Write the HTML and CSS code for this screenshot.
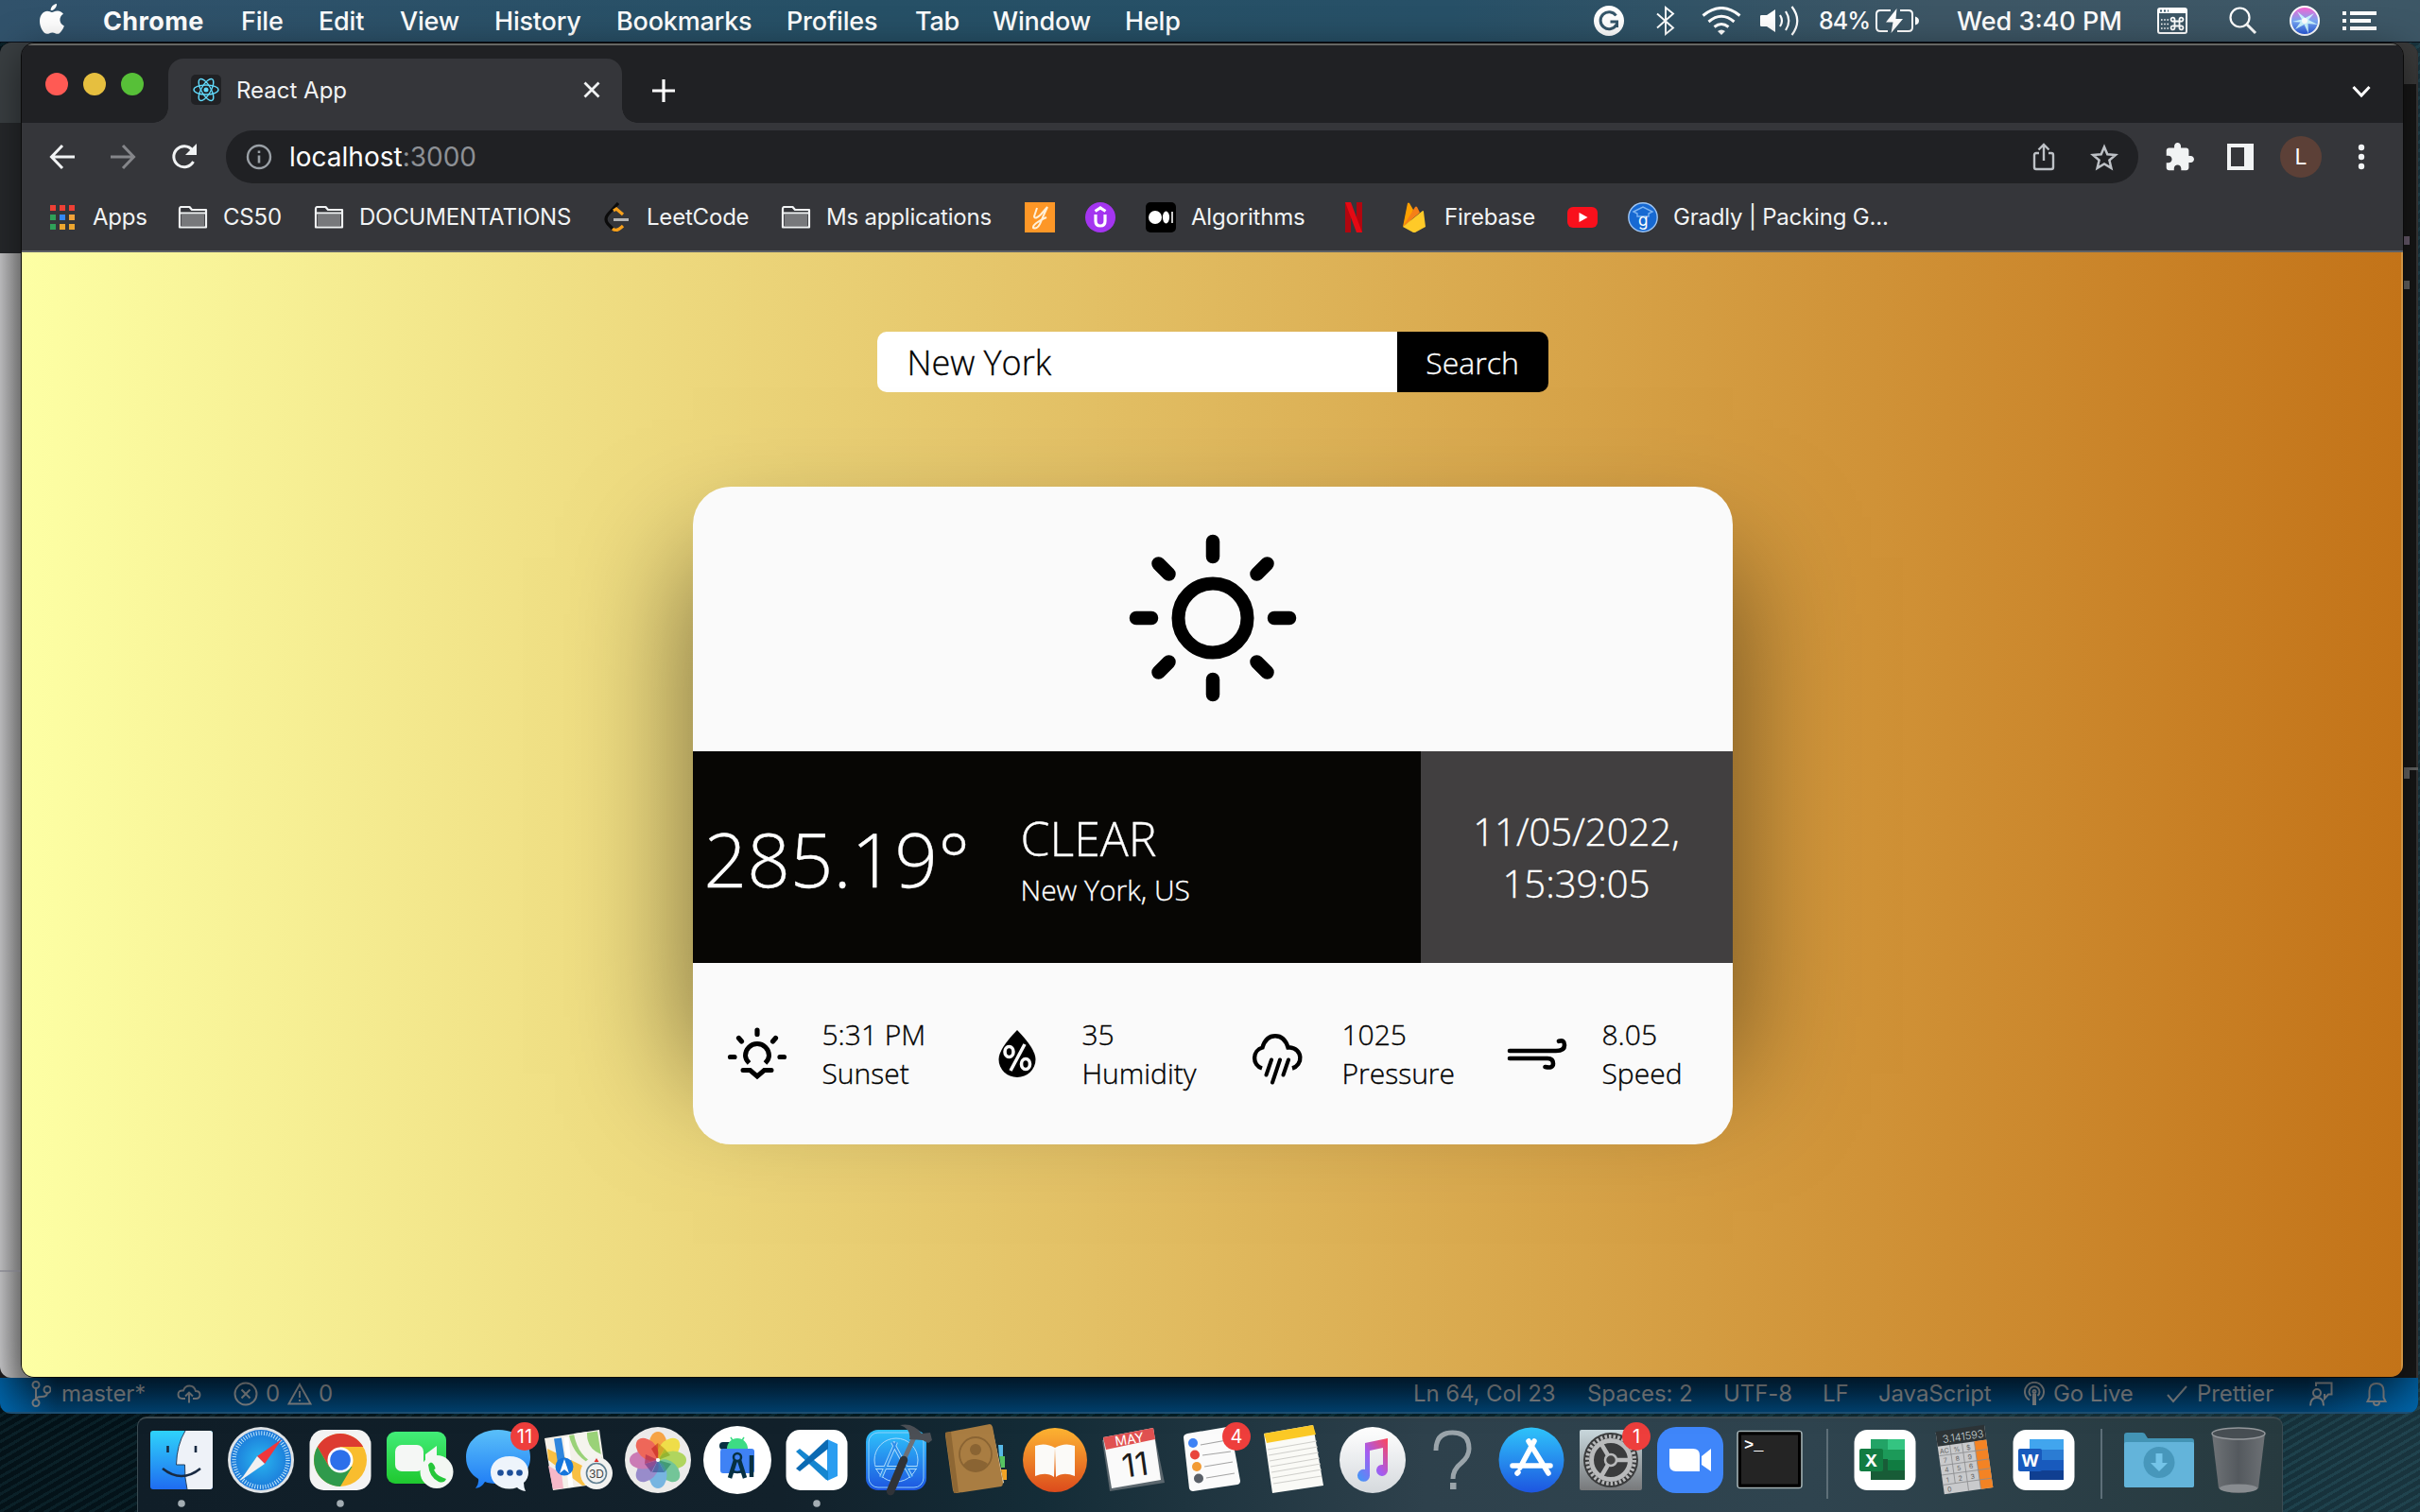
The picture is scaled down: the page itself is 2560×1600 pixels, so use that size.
FILE: index.html
```html
<!DOCTYPE html>
<html lang="en">
<head>
<meta charset="utf-8">
<title>React App</title>
<link rel="stylesheet" href="styles.css">
</head>
<body>
<svg width="0" height="0" class="defs" aria-hidden="true">
  <defs>
    <linearGradient id="gBlue" x1="0" y1="0" x2="0" y2="1"><stop offset="0" stop-color="#5ac0fa"/><stop offset="1" stop-color="#1d7af5"/></linearGradient>
    <linearGradient id="gCyan" x1="0" y1="0" x2="0" y2="1"><stop offset="0" stop-color="#2fc4fb"/><stop offset="1" stop-color="#1d55e0"/></linearGradient>
    <linearGradient id="gGreen" x1="0" y1="0" x2="0" y2="1"><stop offset="0" stop-color="#42ec78"/><stop offset="1" stop-color="#1fc82f"/></linearGradient>
    <linearGradient id="gWhite" x1="0" y1="0" x2="0" y2="1"><stop offset="0" stop-color="#ffffff"/><stop offset="1" stop-color="#d5d9dd"/></linearGradient>
    <linearGradient id="gOrange" x1="0" y1="0" x2="0" y2="1"><stop offset="0" stop-color="#fdb432"/><stop offset="1" stop-color="#dc4b1c"/></linearGradient>
    <linearGradient id="gNote" x1="1" y1="0" x2="0" y2="1"><stop offset="0" stop-color="#ff4758"/><stop offset=".5" stop-color="#a45cf0"/><stop offset="1" stop-color="#3c9cf8"/></linearGradient>
    <linearGradient id="gFace" x1="0" y1="0" x2="0" y2="1"><stop offset="0" stop-color="#2fd3fb"/><stop offset="1" stop-color="#1f6cf0"/></linearGradient>
    <linearGradient id="gMetal" x1="0" y1="0" x2="0" y2="1"><stop offset="0" stop-color="#c9d8dd"/><stop offset="1" stop-color="#77797b"/></linearGradient>
    <linearGradient id="gTrash" x1="0" y1="0" x2="1" y2="0"><stop offset="0" stop-color="#6f7377"/><stop offset=".5" stop-color="#54595e"/><stop offset="1" stop-color="#6d7175"/></linearGradient>
    <radialGradient id="gSafari"><stop offset="0" stop-color="#29b6f0"/><stop offset="1" stop-color="#1b77d8"/></radialGradient>
    <linearGradient id="gSiri" x1="0" y1="0" x2="0" y2="1"><stop offset="0" stop-color="#ff5fd0"/><stop offset=".5" stop-color="#7aa8f5"/><stop offset="1" stop-color="#2456d8"/></linearGradient>
    <symbol id="folder" viewBox="0 0 32 26"><path d="M2 4.500V23.500H30V5H15L12.500 2H3.500Q2 2 2 4.500Z" fill="none" stroke="#f1f3f4" stroke-width="2.200" stroke-linejoin="round"/><path d="M4 10H28V22H4Z" fill="#77787b"/><path d="M2 8.500H30" stroke="#f1f3f4" stroke-width="2"/></symbol>
  </defs>
</svg>

<header class="menubar">
  <svg class="m-icon" width="28" height="32" viewBox="0 0 28 32" fill="#fff"><path d="M19 0c.3 3.600-3 7.300-6.300 7.100C12.300 3.700 15.600.2 19 0zM13.900 8.900c1.500 0 3-1.500 6-1.500 2.500 0 4.800 1.400 6.100 3.400-5.300 3.100-4.400 10.500.9 12.600-1.200 3.200-4 8.300-6.900 8.400-2.200 0-3-1.400-5.600-1.400s-3.500 1.400-5.600 1.400C5 31.800 1 24.700 1 18.400 1 11.500 5.300 7.800 9 7.800c2.200 0 3.700 1.100 4.900 1.100z"/></svg>
  <b>Chrome</b><span>File</span><span>Edit</span><span>View</span><span>History</span><span>Bookmarks</span><span>Profiles</span><span>Tab</span><span>Window</span><span>Help</span>
  <svg width="32" height="32" viewBox="0 0 32 32"><circle cx="16" cy="16" r="16" fill="#fff"/><path d="M23.500 10.500A9 9 0 1 0 24 20M17.500 17H24.500V23" fill="none" stroke="#35566a" stroke-width="3"/></svg>
  <svg width="20" height="32" viewBox="0 0 20 32"><path d="M1 8.500L18 23.500 10 30V2L18 8.500 1 23.500" fill="none" stroke="#fff" stroke-width="1.900"/></svg>
  <svg width="42" height="30" viewBox="0 0 42 30"><g fill="none" stroke="#fff" stroke-width="3"><path d="M1.500 9.500Q21-6.500 40.500 9.500"/><path d="M7.500 16Q21 4.500 34.500 16"/><path d="M13.500 21.500Q21 15.500 28.500 21.500"/></g><path d="M17 26Q21 23 25 26L21 30Z" fill="#fff"/></svg>
  <svg width="42" height="32" viewBox="0 0 42 32"><path d="M0 11Q0 10 1.500 10H7L16 4V28L7 22H1.500Q0 22 0 21Z" fill="#fff"/><path d="M21 10Q25 16 21 22M27 6Q33.500 16 27 26M33.500 1Q45 16 33.500 31" fill="none" stroke="#fff" stroke-width="2.200"/></svg>
  <span class="batt">84%</span>
  <svg width="46" height="26" viewBox="0 0 46 26"><path d="M16 2H5Q1 2 1 6V20Q1 24 5 24H13M26 2H35Q39 2 39 6V20Q39 24 35 24H23" fill="none" stroke="#fff" stroke-width="2"/><path d="M42 8.500Q46 9.500 46 13T42 17.500Z" fill="#fff"/><path d="M22.500 0L11 14.500H18.500L16.500 26 29 11H21.500Z" fill="#fff"/></svg>
  <span class="clock">Wed 3:40 PM</span>
  <svg width="32" height="28" viewBox="0 0 32 28"><rect x="1" y="1" width="30" height="26" rx="2" fill="none" stroke="#fff" stroke-width="2"/><path d="M1 1H31V6H1Z" fill="#fff"/><path d="M3 3.500H12" stroke="#35566a" stroke-width="2" stroke-dasharray="2 2"/><path d="M4 13H12M4 17.500H12M4 22H12" stroke="#fff" stroke-width="1.600" stroke-dasharray="1.600 1.600"/><path d="M18.500 14.500h5v5h-5zM18.500 14.500h-1.500a2 2 0 1 1 1.500-1.500zM23.500 14.500v-1.500a2 2 0 1 1 1.500 1.500zM23.500 19.500h1.500a2 2 0 1 1-1.500 1.500zM18.500 19.500v1.500a2 2 0 1 1-1.500-1.500z" fill="none" stroke="#fff" stroke-width="1.800"/></svg>
  <svg width="30" height="30" viewBox="0 0 30 30" fill="none" stroke="#fff"><circle cx="11.500" cy="11.500" r="10" stroke-width="2.200"/><path d="M19 19L28 28" stroke-width="3"/></svg>
  <svg width="32" height="32" viewBox="0 0 32 32"><circle cx="16" cy="16" r="15" fill="url(#gSiri)" stroke="#fff" stroke-width="2"/><path d="M3 17L13 14.500 8 6 16.500 13 26 8 20 15 30 20 19.500 19 20 29.500 15.500 20 6 25 11.500 17.500Z" fill="#c9f3ff"/><circle cx="16" cy="16" r="3" fill="#fff"/></svg>
  <svg width="36" height="20" viewBox="0 0 36 20" fill="#fff"><path d="M0 0H4V4H0ZM8 0H36V4H8ZM0 8H4V12H0ZM8 8H30V12H8ZM0 16H4V20H0ZM8 16H36V20H8Z"/></svg>
</header>

<main class="desktop">
  <section class="editor">
    <div class="gutter"><i></i></div>
    <div class="minimap"><i class="mk a"></i><i class="mk b"></i><i class="mk c"></i><i class="line"></i></div>
    <footer class="statusbar">
      <svg width="22" height="28" viewBox="0 0 22 28"><g fill="none" stroke="currentColor" stroke-width="2"><circle cx="6" cy="4.500" r="3.500"/><circle cx="6" cy="23.500" r="3.500"/><circle cx="18" cy="9.500" r="3.500"/><path d="M6 8V20M18 13Q18 17 12 17T6 20"/></g></svg>
      <span>master*</span>
      <svg width="26" height="20" viewBox="0 0 26 20"><path d="M9 15H6Q1.500 15 1.500 10.500T7 6.500Q8.500 1.500 13.500 1.500T20 7Q24.500 7 24.500 11T20 15H17M13 19.500V8.500M9 12.500L13 8.500 17 12.500" fill="none" stroke="currentColor" stroke-width="1.900"/></svg>
      <svg width="26" height="26" viewBox="0 0 26 26"><g fill="none" stroke="currentColor" stroke-width="2"><circle cx="13" cy="13" r="11.500"/><path d="M8.500 8.500L17.500 17.500M17.500 8.500L8.500 17.500"/></g></svg>
      <span>0</span>
      <svg width="26" height="24" viewBox="0 0 26 24"><path d="M13 2L24.500 22.500H1.500ZM13 9V16M13 18V20" fill="none" stroke="currentColor" stroke-width="1.900"/></svg>
      <span>0</span>
      <span>Ln 64, Col 23</span><span>Spaces: 2</span><span>UTF-8</span><span>LF</span><span>JavaScript</span>
      <svg width="22" height="26" viewBox="0 0 22 26"><g fill="none" stroke="currentColor" stroke-width="2"><path d="M6 19.500A10 10 0 1 1 16 19.500M7.500 15A5.500 5.500 0 1 1 14.500 15"/><circle cx="11" cy="10.500" r="1.500"/><path d="M11 13V25" stroke-width="4"/></g></svg>
      <span>Go Live</span>
      <svg width="22" height="20" viewBox="0 0 22 20"><path d="M1 11L7 18 21 2" fill="none" stroke="currentColor" stroke-width="2"/></svg>
      <span>Prettier</span>
      <svg width="26" height="26" viewBox="0 0 26 26"><g fill="none" stroke="currentColor" stroke-width="2"><path d="M8 5V1.500H24.500V13.500H21L17 18V13"/><circle cx="9" cy="12" r="4"/><path d="M2 25.500Q2 17 9 17T16 25.500"/></g></svg>
      <svg width="22" height="26" viewBox="0 0 22 26"><path d="M1.500 21H20.500L18.500 17V10Q18.500 2 11 2T3.500 10V17ZM8 22Q8 25 11 25T14 22" fill="none" stroke="currentColor" stroke-width="2"/></svg>
    </footer>
  </section>

  <section class="chrome">
    <div class="tabstrip">
      <div class="lights"><i class="red"></i><i class="yellow"></i><i class="green"></i></div>
      <div class="tab">
        <svg width="32" height="32" viewBox="0 0 32 32"><rect width="32" height="32" rx="5" fill="#202124"/><g fill="none" stroke="#61dafb" stroke-width="1.400"><ellipse cx="16" cy="16" rx="13" ry="5"/><ellipse cx="16" cy="16" rx="13" ry="5" transform="rotate(60 16 16)"/><ellipse cx="16" cy="16" rx="13" ry="5" transform="rotate(120 16 16)"/></g><circle cx="16" cy="16" r="2.500" fill="#61dafb"/></svg>
        <span>React App</span>
        <svg width="18" height="18" viewBox="0 0 18 18"><path d="M1.500 1.500L16.500 16.500M16.500 1.500L1.500 16.500" stroke="#f1f3f4" stroke-width="2.800"/></svg>
      </div>
      <svg class="plus" width="26" height="26" viewBox="0 0 26 26"><path d="M13 1V25M1 13H25" stroke="#fff" stroke-width="3.200"/></svg>
      <svg class="chev" width="20" height="14" viewBox="0 0 20 14"><path d="M1.500 2L10 11 18.500 2" fill="none" stroke="#fff" stroke-width="3"/></svg>
    </div>
    <div class="toolbar">
      <svg width="28" height="28" viewBox="0 0 28 28"><path d="M27 14H3M14 2L2.500 14 14 26" fill="none" stroke="#f1f3f4" stroke-width="3"/></svg>
      <svg width="28" height="28" viewBox="0 0 28 28"><path d="M1 14H25M14 2L25.500 14 14 26" fill="none" stroke="#85868a" stroke-width="3"/></svg>
      <svg width="28" height="28" viewBox="0 0 28 28"><path d="M23.500 19A11 11 0 1 1 22.500 7" fill="none" stroke="#f1f3f4" stroke-width="3"/><path d="M27 0V12H15Z" fill="#f1f3f4"/></svg>
      <div class="omnibox">
        <svg width="28" height="28" viewBox="0 0 28 28"><circle cx="14" cy="14" r="12" fill="none" stroke="#9aa0a6" stroke-width="2.400"/><path d="M14 12.500V20.500M14 7.500V10" stroke="#9aa0a6" stroke-width="2.600"/></svg>
        <span class="url">localhost<em>:3000</em></span>
        <svg width="24" height="30" viewBox="0 0 24 30"><path d="M7 11H4Q2 11 2 13V26Q2 28 4 28H20Q22 28 22 26V13Q22 11 20 11H17M12 19V3M6.500 7.500L12 2 17.500 7.500" fill="none" stroke="#bdc1c6" stroke-width="2.400"/></svg>
        <svg width="30" height="29" viewBox="0 0 30 29"><path d="M15 3.500L18.300 11.200 27 11.900 20.400 17.500 22.400 25.800 15 21.400 7.600 25.800 9.600 17.500 3 11.900 11.700 11.200Z" fill="none" stroke="#bdc1c6" stroke-width="2.500"/></svg>
      </div>
      <svg width="30" height="30" viewBox="1.500 1 21.500 21.500" fill="#f1f3f4"><path d="M20.500 11H19V7c0-1.100-.9-2-2-2h-4V3.500C13 2.120 11.880 1 10.500 1S8 2.120 8 3.500V5H4c-1.100 0-1.990.9-1.990 2v3.800H3.500c1.490 0 2.700 1.210 2.700 2.700s-1.210 2.700-2.700 2.700H2V20c0 1.100.9 2 2 2h3.800v-1.500c0-1.490 1.210-2.700 2.700-2.700s2.700 1.210 2.700 2.700V22H17c1.100 0 2-.9 2-2v-4h1.500c1.380 0 2.500-1.120 2.500-2.500S21.880 11 20.500 11z"/></svg>
      <svg width="28" height="28" viewBox="0 0 28 28"><path fill-rule="evenodd" d="M0 0H28V28H0ZM4 4V24H18V4Z" fill="#f1f3f4"/></svg>
      <span class="avatar">L</span>
      <svg width="8" height="28" viewBox="0 0 8 28" fill="#f1f3f4"><circle cx="4" cy="4" r="3.200"/><circle cx="4" cy="14" r="3.200"/><circle cx="4" cy="24" r="3.200"/></svg>
    </div>
    <nav class="bookmarks">
      <svg width="28" height="28" viewBox="0 0 28 28"><path d="M1 1h6v6H1zM11 1h6v6h-6zM21 1h6v6h-6z" fill="#ee4035"/><path d="M1 11h6v6H1z" fill="#2fa158"/><path d="M11 11h6v6h-6z" fill="#3487f3"/><path d="M21 11h6v6h-6z" fill="#f2a33a"/><path d="M1 21h6v6H1z" fill="#2fa158"/><path d="M11 21h6v6h-6zM21 21h6v6h-6z" fill="#eda62f"/></svg>
      <span>Apps</span>
      <svg width="32" height="26"><use href="#folder"/></svg><span>CS50</span>
      <svg width="32" height="26"><use href="#folder"/></svg><span>DOCUMENTATIONS</span>
      <svg width="28" height="32" viewBox="0 0 28 32" fill="none" stroke-width="3.200"><path d="M15 1L4 13Q0 18 4 23L9 28Q11 30 13 30" stroke="#0b0b0b"/><path d="M10 9L13 7 20 13M9 28Q13 32 20 25" stroke="#f9a11b"/><path d="M10 18.500H26" stroke="#b3b3b3"/></svg>
      <span>LeetCode</span>
      <svg width="32" height="26"><use href="#folder"/></svg><span>Ms applications</span>
      <svg width="32" height="32" viewBox="0 0 32 32"><path d="M0 0H32V32H0Z" fill="#fd9727"/><path d="M13 6L10 15Q11 19 17 13L24 5Q19 16 16 23 13 29 9 27 8 23 23 16" fill="none" stroke="#fff0d8" stroke-width="2"/></svg>
      <svg width="32" height="32" viewBox="0 0 32 32"><circle cx="16" cy="16" r="16" fill="#a435f0"/><path d="M11 13V20Q11 25 16 25T21 20V13M10.500 9.500L16 6 21.500 9.500" fill="none" stroke="#fff" stroke-width="3.200"/></svg>
      <svg width="32" height="32" viewBox="0 0 32 32"><rect width="32" height="32" rx="5" fill="#000"/><circle cx="10" cy="16" r="7" fill="#fff"/><ellipse cx="21.500" cy="16" rx="3.600" ry="6.500" fill="#fff"/><path d="M28 10V22" stroke="#fff" stroke-width="1.600"/></svg>
      <span>Algorithms</span>
      <svg width="18" height="32" viewBox="0 0 18 32"><path d="M0 0H6V32H0ZM12 0H18V32H12Z" fill="#b1060f"/><path d="M0 0H6L18 32H12Z" fill="#e50914"/></svg>
      <svg width="24" height="32" viewBox="0 0 24 32"><path d="M0 26L5 1Q6 0 7 1L11 8 8 20Z" fill="#ffa000"/><path d="M0 26L13 5Q14 4 15 5L18 11Z" fill="#f57f17"/><path d="M0 26L21 9Q22 9 22 10L24 26 13 32Q12 32 11 32Z" fill="#ffca28"/></svg>
      <span>Firebase</span>
      <svg width="32" height="24" viewBox="0 0 32 24"><rect y="1" width="32" height="22" rx="6" fill="#f9101c"/><path d="M12.500 7L21.500 12 12.500 17Z" fill="#fff"/></svg>
      <svg width="32" height="32" viewBox="0 0 32 32"><circle cx="16" cy="16" r="15.200" fill="#1769d2" stroke="#9fc5f2" stroke-width="1.400"/><path d="M6 10L16 5 26 10 22 12V15H10V12Z" fill="none" stroke="#7db4f2" stroke-width="1.400"/><text x="16" y="25" text-anchor="middle" font-size="17" fill="#fff" class="ui">g</text></svg>
      <span>Gradly | Packing G...</span>
    </nav>

    <div class="page">
      <form class="search"><span class="field">New York</span><span class="btn">Search</span></form>
      <article class="card">
        <div class="hero">
          <svg width="180" height="180" viewBox="-90 -90 180 180" fill="none" stroke="#000" stroke-width="14.500" stroke-linecap="round"><circle r="36.500" stroke-width="14"/><path d="M0-81V-65M0 81V65M-81 0H-65M81 0H65M-57.500-57.500L-46.500-46.500M57.500-57.500L46.500-46.500M-57.500 57.500L-46.500 46.500M57.500 57.500L46.500 46.500" /></svg>
        </div>
        <div class="band">
          <div class="temp">285.19°</div>
          <div class="desc"><div class="cond">CLEAR</div><div class="place">New York, US</div></div>
          <div class="date">11/05/2022, 15:39:05</div>
        </div>
        <div class="stats">
          <div class="stat"><svg width="64" height="58" viewBox="0 0 64 58" fill="none" stroke="#000" stroke-width="5.200" stroke-linecap="round"><path d="M32 4V8.500M12.500 12.500L15.500 16M51.500 12.500L48.500 16M3.500 32.500H8M60.500 32.500H56"/><path d="M23.500 39Q19.500 35 19.500 31A12.500 12.500 0 0 1 44.500 31Q44.500 35 40.500 39" stroke-linecap="butt" stroke-width="5"/><path d="M17 46.500H24.500L32 53 39.500 46.500H47" stroke-width="5"/></svg><p>5:31 PM<br>Sunset</p></div>
          <div class="stat"><svg width="40" height="50" viewBox="0 0 40 50"><path d="M20 0Q39.500 20 39.500 31A19.500 19 0 0 1 .5 31Q.5 20 20 0Z"/><g fill="none" stroke="#fafafa" stroke-width="3.600"><path d="M28 15L13 43"/><ellipse cx="11.500" cy="23" rx="4.500" ry="5.500"/><ellipse cx="29" cy="36" rx="4.500" ry="5.500"/></g></svg><p>35<br>Humidity</p></div>
          <div class="stat"><svg class="low" width="56" height="54" viewBox="0 0 56 54" fill="none" stroke="#000" stroke-width="4.400" stroke-linecap="round"><path d="M12 36.500A11.500 11.500 0 0 1 12.500 14.500Q16 2.200 26 2.200T39.500 14.500H42A11.200 11.200 0 0 1 44 36.500" stroke-linecap="butt"/><path d="M22 27.500L16.500 43.500M31 27.500L23 51.500M40 27.500L34.500 43.500" stroke-width="4"/></svg><p>1025<br>Pressure</p></div>
          <div class="stat"><svg class="wind" width="64" height="34" viewBox="0 0 64 34" fill="none" stroke="#000" stroke-width="4.600" stroke-linecap="round"><path d="M3 13H52Q61 13 61 7T55 2.800M3 21H43Q49 21 49 26.500T40.500 30"/></svg><p>8.05<br>Speed</p></div>
        </div>
      </article>
    </div>
  </section>
</main>

<footer class="dock">
  <svg class="app" viewBox="0 0 84 100"><rect x="9" y="15" width="66" height="62" rx="3" fill="url(#gFace)"/><path d="M46 15H72Q75 15 75 18V74Q75 77 72 77H48Q45 64 45.500 51H36.500Q37 30 46 15Z" fill="#eef2f8"/><path d="M46 15Q37 30 36.500 51H45.500Q45 64 48 77" fill="none" stroke="#24405f" stroke-width="1"/><path d="M27.500 31V38M57 31V38" stroke="#182a42" stroke-width="2.600"/><path d="M22 55Q42 71 62 55" fill="none" stroke="#182a42" stroke-width="2.600"/><circle cx="42" cy="92" r="3.800" fill="#a3adb3"/></svg>
  <svg class="app" viewBox="0 0 84 100"><circle cx="42" cy="46" r="35" fill="#dfe3e6"/><circle cx="42" cy="46" r="32" fill="url(#gSafari)"/><circle cx="42" cy="46" r="28.500" fill="none" stroke="#bfe4fa" stroke-width="4.500" stroke-dasharray="1 1.800"/><path d="M64 24L46 50 38 42Z" fill="#f0373b"/><path d="M20 68L46 50 38 42Z" fill="#f1f1f1"/></svg>
  <svg class="app" viewBox="0 0 84 100"><rect x="9.500" y="14" width="65" height="64" rx="15" fill="#f3f3f3"/><circle cx="42" cy="46" r="28" fill="#f9bd2e"/><path d="M17.800 32A28 28 0 0 1 66.200 32H42L30 53Z" fill="#dd3b31"/><path d="M17.800 32A28 28 0 0 0 42 74L54.500 53 30 53Z" fill="#2f9a4c"/><circle cx="42" cy="46" r="13.500" fill="#fff"/><circle cx="42" cy="46" r="10.800" fill="#2c70ea"/><circle cx="42" cy="92" r="3.800" fill="#a3adb3"/></svg>
  <svg class="app" viewBox="0 0 84 100"><rect x="7" y="16" width="63" height="55" rx="9" fill="url(#gGreen)"/><rect x="16" y="30" width="30" height="28" rx="7" fill="#f5f7f5"/><path d="M48 40L60 31V57L48 48Z" fill="#f5f7f5"/><circle cx="60" cy="58.500" r="17.500" fill="#f3f7f3"/><path d="M51 51Q54 46 57 51T57 56Q59 61 63 63T70 66Q68 71 62 69 52 64 51 51Z" fill="#25c739"/></svg>
  <svg class="app" viewBox="0 0 84 100"><path d="M41 14C61 14 75 26 75 43S61 70 41 71Q32 71 27 69 24 75 17 76 21 71 20 66 7 58 7 43C7 26 21 14 41 14Z" fill="url(#gBlue)"/><path d="M53 42C65 42 73 49 73 59Q73 66 68 70 68 75 70 79 64 78 61 75 57 76.500 53 76.500C41 76.500 33 69 33 59S41 42 53 42Z" fill="#eef4fb"/><g fill="#1d4f99"><circle cx="43.500" cy="59.500" r="3.300"/><circle cx="53.500" cy="59.500" r="3.300"/><circle cx="63.500" cy="59.500" r="3.300"/></g><circle cx="69" cy="21" r="15" fill="#ee3e3c"/><text x="69" y="28" text-anchor="middle" font-size="20" fill="#fff" class="ui">11</text></svg>
  <svg class="app" viewBox="0 0 84 100"><path d="M6 23L64 14 72 70 15 78Z" fill="#f4f1ea"/><path d="M32 20L62 15.500 68 55Q38 48 32 20Z" fill="#9ad278"/><path d="M37 18L51 16Q50 34 66 40V52Q42 46 37 18Z" fill="#f5f4ee"/><path d="M9 34L38 48 66 62 70 70 46 73 10 46Z" fill="#f9c043"/><path d="M10 52L24 60 26 76 15 77Z" fill="#f5b8c8"/><path d="M20 23L25 55" stroke="#2f86dd" stroke-width="8"/><path d="M29 22L34 75" stroke="#fff" stroke-width="5"/><circle cx="27" cy="53" r="9.500" fill="#1576dc"/><path d="M27 45L32 60 27 56 22 60Z" fill="#fff"/><circle cx="61" cy="60" r="17" fill="#f2f2f0"/><circle cx="61" cy="60" r="10.500" fill="none" stroke="#5f7f91" stroke-width="1.600"/><text x="61" y="65" text-anchor="middle" font-size="12" fill="#444" class="ui">3D</text><path d="M61 44L63.500 48H58.500Z" fill="#e1302a"/></svg>
  <svg class="app" viewBox="0 0 84 100"><circle cx="42" cy="46" r="35" fill="#ecebea"/><g opacity=".88"><ellipse cx="42" cy="30" rx="9.500" ry="14" fill="#f89a2e"/><ellipse cx="42" cy="30" rx="9.500" ry="14" fill="#f0dc33" transform="rotate(45 42 46)"/><ellipse cx="42" cy="30" rx="9.500" ry="14" fill="#a8d24b" transform="rotate(90 42 46)"/><ellipse cx="42" cy="30" rx="9.500" ry="14" fill="#63c08d" transform="rotate(135 42 46)"/><ellipse cx="42" cy="30" rx="9.500" ry="14" fill="#68aee0" transform="rotate(180 42 46)"/><ellipse cx="42" cy="30" rx="9.500" ry="14" fill="#8d7fc7" transform="rotate(225 42 46)"/><ellipse cx="42" cy="30" rx="9.500" ry="14" fill="#c76dae" transform="rotate(270 42 46)"/><ellipse cx="42" cy="30" rx="9.500" ry="14" fill="#ef5546" transform="rotate(315 42 46)"/></g><g opacity=".55"><path d="M42 46L35 34 42 28Z" fill="#c01d12"/><path d="M42 46L42 28 49 34Z" fill="#c07a10"/><path d="M42 46L49 34 55 41Z" fill="#7f9a10"/><path d="M42 46L56 50 49 59Z" fill="#1c7a5a"/><path d="M42 46L49 59 36 59Z" fill="#204a88"/><path d="M42 46L35 59 28 50Z" fill="#5b2a7a"/><path d="M42 46L28 50 29 40Z" fill="#a31f4a"/></g><circle cx="42" cy="46" r="2" fill="#fff"/></svg>
  <svg class="app" viewBox="0 0 84 100"><circle cx="42" cy="46" r="36" fill="#fff"/><rect x="23" y="27" width="14" height="8" rx="4" fill="#073042"/><path d="M31 34A11 11 0 0 1 53 34Z" fill="#3ddc84"/><path d="M35 22L38 27M49 22L46 27" stroke="#3ddc84" stroke-width="1.500"/><rect x="24" y="34" width="36" height="26" rx="3" fill="#3f82f5"/><path d="M41 43L34 65M43 43L50 65" stroke="#073042" stroke-width="4.500"/><circle cx="42" cy="43" r="4" fill="#3f82f5" stroke="#073042" stroke-width="2.500"/><path d="M36 57Q42 61 48 57" fill="none" stroke="#073042" stroke-width="2.500"/><path d="M57 41V64" stroke="#073042" stroke-width="4.500"/></svg>
  <svg class="app" viewBox="0 0 84 100"><rect x="9.500" y="14" width="65" height="64" rx="15" fill="#fff"/><path d="M53 24L64 29V63L53 68Z" fill="#2a9df0"/><path d="M20 37L24 34 54 58V67L52 67Z" fill="#1586d0"/><path d="M20 55L24 58 54 34V25L52 25Z" fill="#0b6ab3"/><circle cx="42" cy="92" r="3.800" fill="#a3adb3"/></svg>
  <svg class="app" viewBox="0 0 84 100"><rect x="10" y="14" width="64" height="64" rx="13" fill="url(#gCyan)"/><rect x="13" y="17" width="58" height="58" rx="10" fill="none" stroke="#8fd0fb" stroke-width="1"/><g fill="none" stroke="#a9dafc"><circle cx="42" cy="46" r="23" stroke-width="1"/><path d="M42 27L26 64M38 27L58 64M20 54H64" stroke-width="4"/><path d="M42 27L26 64M38 27L58 64M20 54H64" stroke="#2b8deb" stroke-width="2"/></g><path d="M61 22L49 48" stroke="#6d7177" stroke-width="5"/><path d="M50 46L36 79" stroke="#303338" stroke-width="8.500" stroke-linecap="round"/><path d="M46 9Q60 6 69 18L78 17 80 25 76 28 70 25 56 24Q58 13 46 9Z" fill="#4b4f55"/></svg>
  <svg class="app" viewBox="0 0 84 100"><path d="M60 14L72 70 64 74Z" fill="#efe0c0"/><path d="M66 30H71V42H67Z" fill="#57b9e8"/><path d="M67 42H73V54H69Z" fill="#56c462"/><path d="M69 56H75V67H71Z" fill="#f2a325"/><path d="M10 17L57 8Q59 8 60 11L71 70Q71 73 69 74L22 81Q19 81 18 78L10 20Z" fill="#a97d42"/><path d="M10 17L16 16 24 80 19 81Z" fill="#8e6734"/><ellipse cx="42" cy="40" rx="17" ry="18" fill="none" stroke="#8a6433" stroke-width="1.800"/><circle cx="42" cy="35" r="6" fill="#8a6433"/><path d="M29 51Q34 44 42 45T55 50Q50 58 42 58T29 51Z" fill="#8a6433"/></svg>
  <svg class="app" viewBox="0 0 84 100"><circle cx="42" cy="46" r="34" fill="url(#gOrange)"/><path d="M42 33Q32 27 21 31V63Q33 58 41 64ZM42 33Q52 27 63 31V63Q51 58 43 64Z" fill="#fbfaf8"/></svg>
  <svg class="app" viewBox="0 0 84 100"><path d="M8 25L62 13 74 70 16 79Z" fill="#5b676e"/><path d="M9 22L62 12 70 67 18 76Z" fill="#fafafa"/><path d="M9 22L62 12 64 24 12 35Z" fill="#e05151"/><text x="37" y="29" text-anchor="middle" font-size="14" fill="#fff" class="ui" transform="rotate(-9 37 26)">MAY</text><text x="43" y="63" text-anchor="middle" font-size="34" fill="#1c1c1c" class="ui" transform="rotate(-8 43 52)">11</text></svg>
  <svg class="app" viewBox="0 0 84 100"><path d="M14 18L56 11Q59 11 60 14L70 68Q70 71 67 72L20 79Q17 79 16 76L10 22Q10 19 14 18Z" fill="#fbfbfb"/><g stroke="#a4a4a4" stroke-width="1.200"><path d="M28 30L56 25M30 41L60 37M32 53L62 48M34 65L64 60"/></g><circle cx="20" cy="28" r="5" fill="#3d82f5"/><circle cx="22" cy="40.500" r="5" fill="#e9453d"/><circle cx="24" cy="53" r="5" fill="#f29b35"/><circle cx="26" cy="65.500" r="5" fill="#5a6068"/><circle cx="66" cy="21" r="15" fill="#ee3e3c"/><text x="66" y="28" text-anchor="middle" font-size="20" fill="#fff" class="ui">4</text></svg>
  <svg class="app" viewBox="0 0 84 100"><path d="M11 18L63 9 74 73 20 81Z" fill="#fafaf6"/><path d="M11 18L63 9 66 19 14 28Z" fill="#fbc926"/><path d="M15 35L67 26M16 41L68 32M17 47L69 38M18 53L70 44M19 59L71 50M20 65L72 56M21 71L72 63" stroke="#cfcfcb" stroke-width="1.200"/></svg>
  <svg class="app" viewBox="0 0 84 100"><circle cx="42" cy="46" r="35" fill="url(#gWhite)"/><path d="M34 28L58 23V57A6 6 0 1 1 53 51V33L39 36V62A6.500 6.500 0 1 1 34 56Z" fill="url(#gNote)"/></svg>
  <svg class="app" viewBox="0 0 84 100"><path d="M25 36Q25 17 42.500 17T60 34Q60 42 52 49 43 56 43 66" fill="none" stroke="#9aa4aa" stroke-width="5"/><rect x="40" y="70" width="6.500" height="7" fill="#9aa4aa"/></svg>
  <svg class="app" viewBox="0 0 84 100"><circle cx="42" cy="46" r="34.500" fill="url(#gCyan)"/><g stroke="#fff" stroke-width="5.500" stroke-linecap="round"><path d="M45 26L30 54M39 26L60 60M22 52H62M28 59L27 60"/></g></svg>
  <svg class="app" viewBox="0 0 84 100"><rect x="9" y="14" width="66" height="64" rx="2" fill="url(#gMetal)"/><circle cx="42" cy="46" r="29" fill="#3a3b3c"/><circle cx="42" cy="46" r="25" fill="none" stroke="#b9babb" stroke-width="4" stroke-dasharray="2.600 2"/><circle cx="42" cy="46" r="20.500" fill="none" stroke="#b9babb" stroke-width="5"/><path d="M42 46L60 46M42 46L32 29M42 46L32 63" stroke="#b9babb" stroke-width="4.500"/><circle cx="42" cy="46" r="6" fill="#444" stroke="#b9babb" stroke-width="2.500"/><circle cx="69" cy="21" r="15" fill="#ee3e3c"/><text x="69" y="28" text-anchor="middle" font-size="20" fill="#fff" class="ui">1</text></svg>
  <svg class="app" viewBox="0 0 84 100"><rect x="7" y="11" width="70" height="70" rx="20" fill="#3f86fa"/><path d="M20 34H45Q52 34 52 41V58H27Q20 58 20 51ZM54 42L64 34V58L54 51Z" fill="#fff"/></svg>
  <svg class="app" viewBox="0 0 84 100"><rect x="8" y="15.500" width="68" height="60" rx="3" fill="#242424" stroke="#a4b2b5" stroke-width="1.500"/><rect x="10.500" y="18" width="63" height="55" fill="none" stroke="#000" stroke-width="3"/><text x="15" y="35" font-size="17" fill="#fff" class="mono">&gt;_</text></svg>
  <i class="sep"></i>
  <svg class="app" viewBox="0 0 84 100"><rect x="9.500" y="14" width="65" height="64" rx="14" fill="#fff"/><path d="M27 24H63V67H27Z" fill="#1c9a59"/><path d="M27 24H45V35H27Z" fill="#22a366"/><path d="M45 24H63V35H45Z" fill="#34c481"/><path d="M27 45H45V67H27Z" fill="#185c37"/><path d="M45 46H63V57H45Z" fill="#107c41"/><path d="M45 57H63V67H45Z" fill="#185c37"/><rect x="15" y="34" width="25" height="24" rx="2" fill="#127c42"/><text x="27.500" y="52.500" text-anchor="middle" font-size="18" font-weight="700" fill="#fff" class="ui">X</text></svg>
  <svg class="app" viewBox="0 0 84 100"><g transform="rotate(-8 42 46)"><rect x="16" y="13" width="52" height="66" fill="#c9cacc"/><rect x="16" y="12" width="52" height="16" fill="#2d3437"/><text x="66" y="25" text-anchor="end" font-size="11" fill="#c5d0d2" class="ui thin">3.141593</text><rect x="55" y="28" width="13" height="51" fill="#f38324"/><path d="M16 38H68M16 48.500H68M16 58.500H68M16 69H68M29 28V69M42 28V79M55 28V79" stroke="#8b8d8f" stroke-width=".8"/><g font-size="7" fill="#666" class="ui"><text x="17.500" y="36">AC</text><text x="32" y="36">%</text><text x="46" y="36">$</text><text x="20" y="46">7</text><text x="33" y="46">8</text><text x="46" y="46">9</text><text x="20" y="56">4</text><text x="33" y="56">5</text><text x="46" y="56">6</text><text x="20" y="67">1</text><text x="33" y="67">2</text><text x="46" y="67">3</text><text x="20" y="77">0</text></g></g></svg>
  <svg class="app" viewBox="0 0 84 100"><rect x="9.500" y="14" width="65" height="64" rx="14" fill="#fff"/><path d="M27 24H63V35H27Z" fill="#41a5ee"/><path d="M27 35H63V46H27Z" fill="#2b7cd3"/><path d="M27 46H63V57H27Z" fill="#185abd"/><path d="M27 57H63V67H27Z" fill="#103f91"/><rect x="15" y="34" width="25" height="24" rx="2" fill="#185abd"/><text x="27.500" y="52.500" text-anchor="middle" font-size="18" font-weight="700" fill="#fff" class="ui">W</text></svg>
  <i class="sep"></i>
  <svg class="app" viewBox="0 0 84 100"><path d="M5 20Q5 17 8 17H24Q27 17 28 20L30 23H76Q79 23 79 26V72Q79 75 76 75H8Q5 75 5 72Z" fill="#4394b5"/><rect x="5" y="27" width="74" height="48" rx="2" fill="#63b4da"/><circle cx="42" cy="48.500" r="16.500" fill="#4797bb"/><path d="M38.500 39H45.500V49H51L42 58 33 49H38.500Z" fill="#74c4e8"/></svg>
  <svg class="app" viewBox="0 0 84 100"><path d="M14 18L21 76Q30 81 42 81T63 76L70 18Z" fill="url(#gTrash)"/><ellipse cx="42" cy="18" rx="28" ry="6" fill="#474e53" stroke="#94989c" stroke-width="1.500"/><ellipse cx="42" cy="76" rx="20" ry="4.500" fill="#888c90"/></svg>
</footer>
</body>
</html>
```
FILE: styles.css
```css
* { box-sizing: border-box; }
body {
  margin: 0;
  width: 2560px;
  height: 1600px;
  overflow: hidden;
  display: flex;
  flex-direction: column;
  font-family: Inter, "Liberation Sans", sans-serif;
  background: repeating-linear-gradient(150deg, rgba(70, 140, 150, .1) 0 3px, rgba(0, 0, 0, .12) 3px 8px), linear-gradient(90deg, #04141b, #02222b 50%, #1c3b46);
}
.defs { position: absolute; }
svg { display: block; }
.ui { font-family: Inter, "Liberation Sans", sans-serif; }
.thin { font-weight: 300; }
.mono { font-family: "Liberation Mono", monospace; font-weight: 700; }

.menubar {
  flex: none;
  height: 45px;
  padding: 0 0 1px 41px;
  display: grid;
  grid-template-columns: 68px 146px 82px 86px 100px 129px 180px 136px 82px 140px 496px 66px 48px 62px 62px 60px 86px 212px 76px 64px 56px 46px;
  align-items: center;
  color: #fff;
  font-size: 27px;
  font-weight: 500;
  letter-spacing: -.2px;
  white-space: nowrap;
  background: linear-gradient(90deg, #31526b, #265066 35%, #275067 60%, #3d5665 80%, #3d5766);
  border-bottom: 1px solid #09101a;
}
.menubar b { font-weight: 700; letter-spacing: .4px; }
.menubar b, .menubar span { padding-top: 1px; }
.menubar .m-icon { margin-top: -4px; }
.menubar .batt { font-size: 25px; letter-spacing: -1px; }
.menubar .clock { letter-spacing: 0; }

.desktop { flex: none; height: 1451px; display: grid; }
.editor, .chrome { grid-area: 1 / 1; }

.editor {
  width: 2558px;
  height: 1451px;
  display: grid;
  grid-template: 1413px 38px / 40px 1fr 40px;
  border-radius: 12px 14px 12px 12px;
  overflow: hidden;
  background: #1c1c1e;
}
.gutter {
  background: linear-gradient(#3a3f42 85px, #26282b 85px 223px, transparent 223px), linear-gradient(90deg, #c4c4c6, #999 22px);
  border-radius: 0 0 0 12px;
  padding-top: 1299px;
}
.gutter i { display: block; height: 2px; background: #a0a0a8; }
.minimap {
  grid-column: 3;
  background: linear-gradient(#3b3b3b 44px, #171717 44px);
  border-right: 2px solid #3a3838;
  position: relative;
}
.minimap i { position: absolute; left: 25px; width: 6px; height: 9px; background: #666; }
.minimap .a { top: 187px; background: #6b5e70; }
.minimap .b { top: 222px; }
.minimap .c { top: 608px; }
.minimap .line { top: 606px; width: 15px; height: 3px; }
.minimap .a { top: 205px; }
.minimap .b { top: 252px; }
.minimap .c { top: 770px; }
.minimap .line { top: 767px; }

.statusbar {
  grid-column: 1 / 4;
  display: grid;
  grid-template-columns: 33px 122px 60px 34px 23px 33px 1158px 184px 144px 105px 59px 154px 31px 120px 32px 118px 61px 30px;
  padding: 0 0 3px 32px;
  align-items: center;
  color: #7d8083;
  font-size: 24px;
  letter-spacing: -.1px;
  white-space: nowrap;
  background: linear-gradient(90deg, rgba(0, 122, 204, .6), transparent 60px 2440px, rgba(0, 122, 204, .6)), linear-gradient(#022540, #01416f);
  border-bottom: 2px solid #1e5176;
}

.chrome {
  position: relative;
  margin-left: 22px;
  width: 2521px;
  height: 1413px;
  display: flex;
  flex-direction: column;
  border-radius: 14px;
  overflow: hidden;
  background: #35363a;
  border: 1px solid #0b0b0b;
  box-shadow: 0 10px 40px rgba(0, 0, 0, .5);
}
.tabstrip {
  height: 84px;
  flex: none;
  display: flex;
  align-items: center;
  background: #202124;
  border-top: 2px solid #666764;
}
.lights { display: flex; gap: 16px; padding-left: 25px; width: 155px; flex: none; }
.lights i { width: 24px; height: 24px; border-radius: 50%; }
.red { background: #ff5a54; }
.yellow { background: #e6bf3f; }
.green { background: #57c038; }
.tab {
  width: 480px;
  height: 68px;
  align-self: flex-end;
  display: grid;
  grid-template-columns: 48px 367px 18px;
  align-items: center;
  padding: 0 0 2px 24px;
  background: #35363a;
  border-radius: 16px 16px 0 0;
  position: relative;
  color: #f1f3f4;
  font-size: 24px;
}
.tab::before, .tab::after {
  content: "";
  position: absolute;
  bottom: 0;
  width: 16px;
  height: 16px;
}
.tab::before { left: -16px; background: radial-gradient(circle at 0 0, transparent 15.500px, #35363a 16px); }
.tab::after { right: -16px; background: radial-gradient(circle at 100% 0, transparent 15.500px, #35363a 16px); }
.plus { margin: 14px 0 0 31px; }
.chev { margin: 16px 34px 0 auto; }

.toolbar {
  flex: none;
  height: 72px;
  display: grid;
  grid-template-columns: 64px 65px 58px 2052px 65px 56px 82px 8px;
  padding-left: 29px;
  align-items: center;
}
.omnibox {
  width: 2023px;
  height: 56px;
  border-radius: 28px;
  background: #202124;
  display: grid;
  grid-template-columns: 46px 1844px 61px 30px;
  align-items: center;
  padding-left: 21px;
}
.url { color: #fff; font-size: 28px; }
.url em { font-style: normal; color: #8d9095; }
.avatar {
  width: 44px;
  height: 44px;
  border-radius: 50%;
  background: #5c4037;
  color: #fff;
  font-size: 23px;
  display: flex;
  align-items: center;
  justify-content: center;
}
.bookmarks {
  flex: none;
  height: 65px;
  padding: 0 0 8px 29px;
  display: grid;
  grid-template-columns: 46px 90px 48px 96px 48px 259px 45px 142px 48px 210px 64px 64px 48px 163px 61px 44px 130px 64px 48px 400px;
  align-items: center;
  color: #f1f3f4;
  font-size: 24px;
  letter-spacing: -.2px;
  white-space: nowrap;
  border-bottom: 2px solid #5e6166;
}

.page {
  flex: 1;
  padding-top: 84px;
  display: flex;
  flex-direction: column;
  align-items: center;
  font-family: "Open Sans", "Noto Sans", sans-serif;
  font-weight: 300;
  -webkit-text-stroke: .35px currentColor;
  color: #000;
  background: linear-gradient(90deg, #fdffa4, #c37318);
  box-shadow: inset -2px 0 rgba(220, 180, 110, .5);
}
.search {
  flex: none;
  width: 710px;
  height: 64px;
  margin-bottom: 100px;
  border-radius: 10px;
  overflow: hidden;
  display: grid;
  grid-template-columns: 550px 160px;
}
.field, .btn { display: flex; align-items: center; }
.field { background: #fff; padding-left: 32px; font-size: 36px; }
.btn { background: #000; color: #fff; justify-content: center; font-size: 32px; }
.card {
  flex: none;
  width: 1100px;
  height: 696px;
  position: relative;
  display: grid;
  grid-template-rows: 280px 224px 192px;
}
.card::before {
  content: "";
  position: absolute;
  inset: 75px 0;
  box-shadow: 0 0 120px rgba(0, 0, 0, .5);
}
.hero, .band, .stats { position: relative; background: #fafafa; }
.hero { border-radius: 40px 40px 0 0; display: flex; justify-content: center; align-items: center; }
.hero svg { margin-top: -3px; }
.band {
  display: grid;
  grid-template-columns: 347px 423px 330px;
  align-items: center;
  background: #070604;
  color: #fff;
}
.temp { padding-left: 12px; font-size: 80px; white-space: nowrap; }
.cond { font-size: 50px; }
.place { font-size: 30px; }
.date {
  height: 224px;
  padding: 0 50px;
  display: flex;
  align-items: center;
  text-align: center;
  font-size: 40px;
  background: #413f40;
}
.stats {
  border-radius: 0 0 40px 40px;
  display: grid;
  grid-template-columns: repeat(4, 275px);
  align-items: center;
}
.stat { display: grid; grid-template-columns: 137px 138px; align-items: center; font-size: 30px; }
.stat svg { justify-self: center; }
.stat .low { margin-top: 12px; }
.stat .wind { margin-top: 2px; }
.stat p { margin: 0; white-space: nowrap; }

.dock {
  flex: none;
  margin: 3px 0 0 145px;
  width: 2270px;
  height: 101px;
  padding-left: 4px;
  display: flex;
  overflow: hidden;
  border: 1px solid #3c4b52;
  border-top: 2px solid #3f4c52;
  border-bottom: 0;
  border-radius: 10px 10px 0 0;
  background: linear-gradient(90deg, #101e28, #12212b 30%, #142c37 42%, #2e414c 60%, #2f444f 78%, #273a3f);
}
.app { flex: none; width: 84px; height: 100px; margin-top: -2px; }
.sep { flex: none; width: 2px; height: 74px; margin: 11px 18px; background: #5d6f78; }
```
